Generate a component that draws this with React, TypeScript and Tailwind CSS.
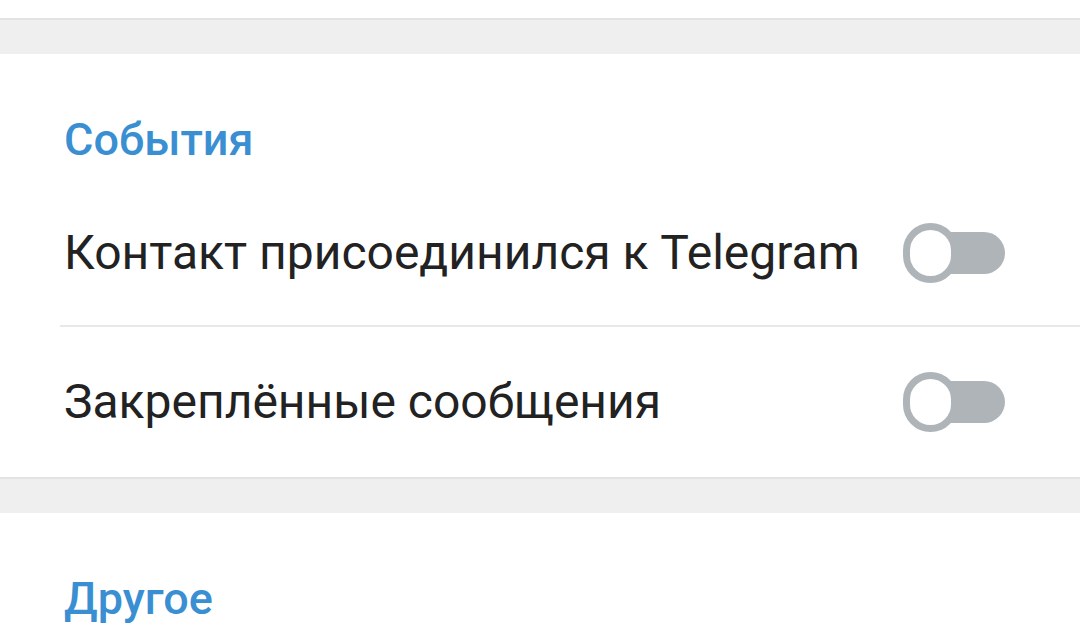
import React from "react";

function Toggle() {
  return (
    <div className="relative w-[102px] h-[60px] shrink-0">
      <div className="absolute right-0 top-[9px] h-[42px] w-[80px] rounded-full bg-[#aeb4b8]" />
      <div className="absolute left-0 top-0 w-[55px] h-[60px] rounded-full bg-white border-[7px] border-[#aeb4b8] box-border" />
    </div>
  );
}

function Band() {
  return <div className="h-[36px] bg-[#efefef] border-t-2 border-[#e3e3e3] box-border" />;
}

function Header({ children }: { children: React.ReactNode }) {
  return (
    <div className="h-[126px] pt-[60px] pl-[64px]">
      <div className="text-[45px] leading-[52px] font-medium text-[#3a8fd2]">{children}</div>
    </div>
  );
}

export default function App() {
  return (
    <div
      className="w-[1080px] h-[639px] overflow-hidden bg-white"
      style={{ fontFamily: "Roboto, 'Noto Sans', sans-serif" }}
    >
      <div className="h-[18px] bg-white" />
      <Band />
      <div className="bg-white">
        <Header>События</Header>
        <div className="flex items-center justify-between pl-[64px] pr-[75px] h-[145px]">
          <span className="text-[48px] leading-[56px] text-[#222222] whitespace-nowrap">Контакт присоединился к Telegram</span>
          <Toggle />
        </div>
        <div className="h-[2px] ml-[60px] bg-[#e8e8e8]" />
        <div className="flex items-center justify-between pl-[64px] pr-[75px] h-[150px]">
          <span className="text-[48px] leading-[56px] text-[#222222] whitespace-nowrap">Закреплённые сообщения</span>
          <Toggle />
        </div>
      </div>
      <Band />
      <div className="bg-white">
        <Header>Другое</Header>
      </div>
    </div>
  );
}
